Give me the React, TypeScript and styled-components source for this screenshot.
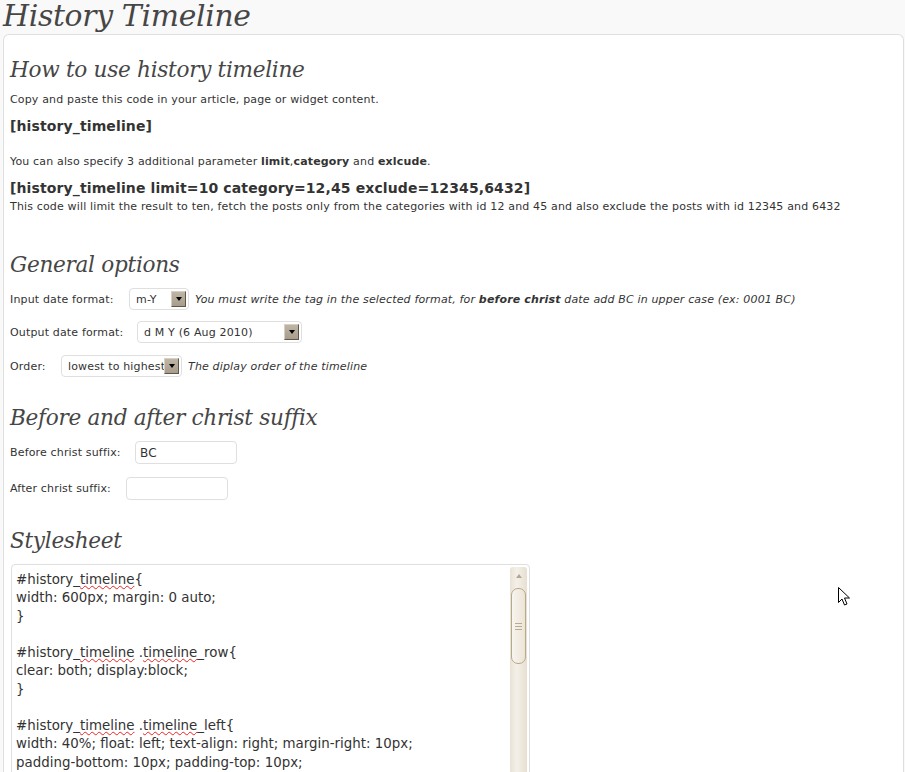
import React from "react";
import styled, { createGlobalStyle } from "styled-components";

const Global = createGlobalStyle`
  html, body { margin: 0; padding: 0; overflow: hidden; background: #f9f9f9; }
  body { font-family: "DejaVu Sans", Verdana, sans-serif; font-size: 11px; color: #333; letter-spacing: 0.16px; }
`;

const Page = styled.div`
  width: 905px;
  height: 772px;
  overflow: hidden;
  position: relative;
  background: #f9f9f9;
`;

const Title = styled.h1`
  margin: 0;
  height: 34px;
  padding-left: 3px;
  font-family: "DejaVu Serif", Georgia, serif;
  font-style: italic;
  font-weight: normal;
  font-size: 29.8px;
  line-height: 31px;
  color: #464646;
  letter-spacing: -0.3px;
`;

const Panel = styled.div`
  margin-left: 3px;
  margin-right: 1px;
  background: #fff;
  border: 1px solid #dfdfdf;
  border-bottom: none;
  border-radius: 6px 6px 0 0;
  padding: 0 0 0 6px;
  height: 760px;
`;

const Heading = styled.h2<{ $mt: number }>`
  margin: ${(p) => p.$mt}px 0 0 0;
  font-family: "DejaVu Serif", Georgia, serif;
  font-style: italic;
  font-weight: normal;
  font-size: 21.6px;
  line-height: 32px;
  color: #464646;
  letter-spacing: -0.3px;
`;

const Para = styled.p<{ $mt: number }>`
  margin: ${(p) => p.$mt}px 0 0 0;
  line-height: 18px;
  font-size: 11px;
`;

const Code = styled.p<{ $mt: number }>`
  margin: ${(p) => p.$mt}px 0 0 0;
  line-height: 20px;
  font-size: 14px;
  font-weight: bold;
  letter-spacing: 0.12px;
`;

const Row = styled.div<{ $mt: number; $h: number }>`
  margin-top: ${(p) => p.$mt}px;
  height: ${(p) => p.$h}px;
  display: flex;
  align-items: center;
`;

const Label = styled.span<{ $w: number }>`
  width: ${(p) => p.$w}px;
  flex: none;
`;

const Note = styled.em`
  margin-left: 6px;
  font-style: italic;
`;

const SelectBox = styled.div<{ $w: number }>`
  width: ${(p) => p.$w}px;
  height: 22px;
  box-sizing: border-box;
  border: 1px solid #dfdfdf;
  border-radius: 4px;
  background: #fff;
  display: flex;
  align-items: center;
  padding: 0 2px 0 6px;
  flex: none;
`;

const SelectText = styled.span`
  flex: 1;
  white-space: nowrap;
  overflow: hidden;
`;

const Arrow = styled.span`
  width: 15px;
  height: 16px;
  box-sizing: border-box;
  border: 1px solid #5e574c;
  border-top-color: #d6cfc3;
  border-left-color: #d6cfc3;
  background: linear-gradient(#bfb5a5, #a89d8b);
  display: flex;
  align-items: center;
  justify-content: center;
  flex: none;
  &::after {
    content: "";
    border-left: 3px solid transparent;
    border-right: 3px solid transparent;
    border-top: 4px solid #000;
  }
`;

const TextInput = styled.div`
  width: 102px;
  height: 23px;
  box-sizing: border-box;
  border: 1px solid #dfdfdf;
  border-radius: 4px;
  background: #fff;
  padding: 0 4px;
  display: flex;
  align-items: center;
  font-size: 12px;
  flex: none;
`;

const Area = styled.div`
  margin-top: 7px;
  margin-left: 1px;
  width: 519px;
  height: 300px;
  box-sizing: border-box;
  border: 1px solid #dfdfdf;
  border-radius: 4px 4px 0 0;
  display: flex;
  padding: 2px 2px 0 0;
`;

const AreaText = styled.pre`
  flex: 1;
  margin: 0;
  padding: 4px 0 0 4px;
  font-family: "DejaVu Sans", Verdana, sans-serif;
  font-size: 13.4px;
  line-height: 18.25px;
  letter-spacing: 0;
  color: #333;
  white-space: pre;
  overflow: hidden;
`;

const Spell = styled.span`
  text-decoration: underline wavy #e22;
  text-decoration-thickness: 1px;
  text-underline-offset: 1px;
  text-decoration-skip-ink: none;
`;

const Scrollbar = styled.div`
  width: 17px;
  flex: none;
  display: flex;
  flex-direction: column;
  background: linear-gradient(90deg, #e9e2d5, #f4f0e8 40%, #e7dfd0);
  border-radius: 3px 3px 0 0;
`;

const ScrollUp = styled.div`
  height: 18px;
  display: flex;
  align-items: center;
  justify-content: center;
  &::after {
    content: "";
    border-left: 3px solid transparent;
    border-right: 3px solid transparent;
    border-bottom: 4px solid #b3a78f;
  }
`;

const Thumb = styled.div`
  margin: 3px 1px 0 1px;
  height: 76px;
  box-sizing: border-box;
  border: 1px solid #b9a98c;
  border-radius: 7px;
  background: linear-gradient(90deg, #f8f5ef, #ece4d6);
  display: flex;
  flex-direction: column;
  align-items: center;
  justify-content: center;
  gap: 2px;
`;

const Grip = styled.span`
  width: 7px;
  height: 1px;
  background: #b9ab92;
`;

const Cursor = styled.svg`
  position: absolute;
  left: 838px;
  top: 587px;
`;

const T = () => <Spell>timeline</Spell>;

export default function App() {
  return (
    <Page>
      <Global />
      <Title>History Timeline</Title>
      <Panel>
        <Heading $mt={19}>How to use history timeline</Heading>
        <Para $mt={5}>Copy and paste this code in your article, page or widget content.</Para>
        <Code $mt={7}>[history_timeline]</Code>
        <Para $mt={17}>
          You can also specify 3 additional parameter <b>limit</b>,<b>category</b> and <b>exlcude</b>.
        </Para>
        <Code $mt={7}>[history_timeline limit=10 category=12,45 exclude=12345,6432]</Code>
        <Para $mt={0}>
          This code will limit the result to ten, fetch the posts only from the categories with id 12 and 45 and also exclude the posts with id 12345 and 6432
        </Para>

        <Heading $mt={33}>General options</Heading>
        <Row $mt={7} $h={22}>
          <Label $w={119}>Input date format:</Label>
          <SelectBox $w={60}>
            <SelectText>m-Y</SelectText>
            <Arrow />
          </SelectBox>
          <Note>
            You must write the tag in the selected format, for <b>before christ</b> date add BC in upper case (ex: 0001 BC)
          </Note>
        </Row>
        <Row $mt={11} $h={22}>
          <Label $w={127}>Output date format:</Label>
          <SelectBox $w={165}>
            <SelectText>d M Y (6 Aug 2010)</SelectText>
            <Arrow />
          </SelectBox>
        </Row>
        <Row $mt={12} $h={22}>
          <Label $w={51}>Order:</Label>
          <SelectBox $w={121}>
            <SelectText>lowest to highest</SelectText>
            <Arrow />
          </SelectBox>
          <Note>The diplay order of the timeline</Note>
        </Row>

        <Heading $mt={25}>Before and after christ suffix</Heading>
        <Row $mt={7} $h={23}>
          <Label $w={125}>Before christ suffix:</Label>
          <TextInput>BC</TextInput>
        </Row>
        <Row $mt={13} $h={23}>
          <Label $w={116}>After christ suffix:</Label>
          <TextInput />
        </Row>

        <Heading $mt={25}>Stylesheet</Heading>
        <Area>
          <AreaText>
            #history_<T />{"{\n"}
            {"width: 600px; margin: 0 auto;\n}\n\n"}
            #history_<T /> .<T />
            {"_row{\nclear: both; display:block;\n}\n\n"}
            #history_<T /> .<T />
            {"_left{\nwidth: 40%; float: left; text-align: right; margin-right: 10px;\npadding-bottom: 10px; padding-top: 10px;\n}\n"}
          </AreaText>
          <Scrollbar>
            <ScrollUp />
            <Thumb>
              <Grip />
              <Grip />
              <Grip />
            </Thumb>
          </Scrollbar>
        </Area>
      </Panel>
      <Cursor width="12" height="19" viewBox="0 0 12 19">
        <path d="M0.5 0.5 L0.5 15.5 L4 12 L6.5 18 L9 17 L6.5 11 L11.5 11 Z" fill="#fff" stroke="#000" strokeWidth="1" />
      </Cursor>
    </Page>
  );
}
